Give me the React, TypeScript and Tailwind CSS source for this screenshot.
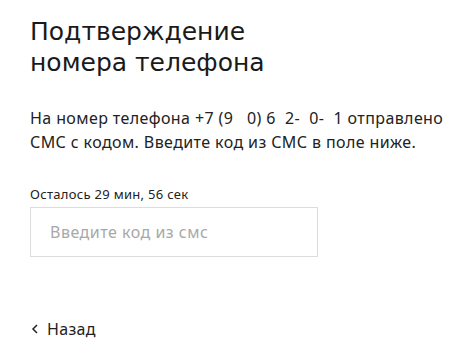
export default function App() {
  return (
    <div className="w-[470px] h-[355px] bg-white text-[#222] pl-[30px] pt-[16px]" style={{ fontFamily: '"Noto Sans", sans-serif' }}>
      <h1 className="text-[25px] leading-[31px] text-[#1a1a1a]" style={{ fontFamily: '"DejaVu Sans", sans-serif' }}>
        Подтверждение
        <br />
        номера телефона
      </h1>
      <p className="mt-[28px] text-[16px] leading-[24px] tracking-[0.4px] text-[#222] whitespace-pre">
        {'На номер телефона +7 (9   0) 6  2-  0-  1 отправлено\nСМС с кодом. Введите код из СМС в поле ниже.'}
      </p>
      <div className="mt-[32px] text-[13px] leading-[16px] tracking-[0.3px] text-[#222]">Осталось 29 мин, 56 сек</div>
      <input
        type="text"
        placeholder="Введите код из смс"
        className="mt-[5px] w-[288px] h-[50px] border border-[#dcdcdc] px-[19px] text-[16px] tracking-[0.5px] placeholder:text-[#a8a8a8] outline-none"
      />
      <button className="mt-[60px] flex items-center gap-[7px] text-[16px] tracking-[0.3px] text-[#222]">
        <svg width="10" height="10" viewBox="0 0 10 10" fill="none" stroke="#222" strokeWidth="1.5">
          <path d="M7 1L3 5l4 4" />
        </svg>
        Назад
      </button>
    </div>
  );
}
